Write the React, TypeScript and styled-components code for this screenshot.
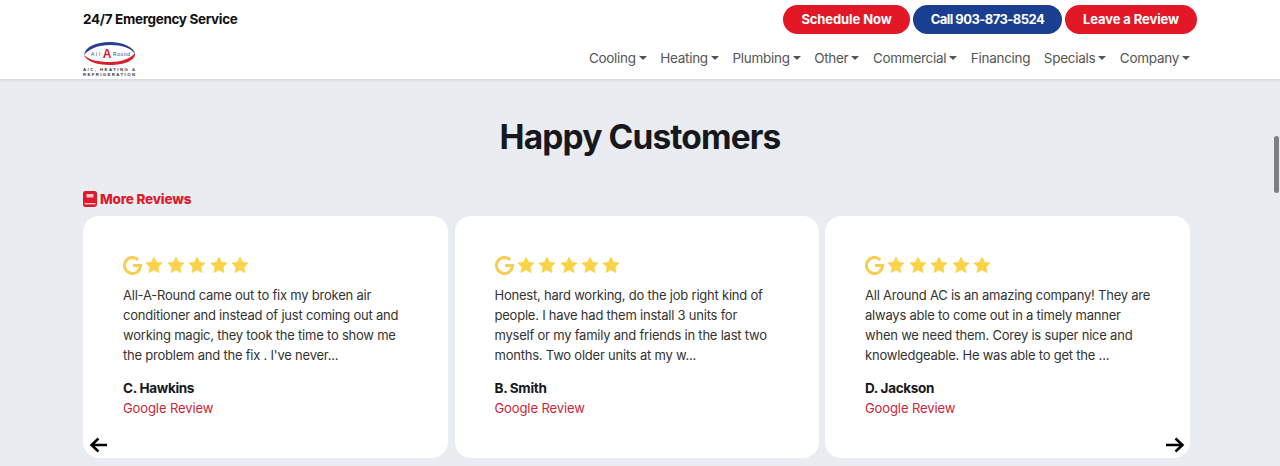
import styled, { createGlobalStyle } from "styled-components";

// #region ##################################################################################### DATA
const NAV_ITEMS = [
  { label: "Cooling", caret: true },
  { label: "Heating", caret: true },
  { label: "Plumbing", caret: true },
  { label: "Other", caret: true },
  { label: "Commercial", caret: true },
  { label: "Financing", caret: false },
  { label: "Specials", caret: true },
  { label: "Company", caret: true },
];

const REVIEWS = [
  {
    name: "C. Hawkins",
    lines: [
      "All-A-Round came out to fix my broken air",
      "conditioner and instead of just coming out and",
      "working magic, they took the time to show me",
      "the problem and the fix . I've never...",
    ],
  },
  {
    name: "B. Smith",
    lines: [
      "Honest, hard working, do the job right kind of",
      "people. I have had them install 3 units for",
      "myself or my family and friends in the last two",
      "months. Two older units at my w...",
    ],
  },
  {
    name: "D. Jackson",
    lines: [
      "All Around AC is an amazing company! They are",
      "always able to come out in a timely manner",
      "when we need them. Corey is super nice and",
      "knowledgeable. He was able to get the ...",
    ],
  },
];
// #endregion

// #region ##################################################################################### STYLES
const Global = createGlobalStyle`
  html, body {
    margin: 0;
    height: 466px;
    overflow: hidden;
    background: #e9ecf1;
    font-family: "Inter", "Liberation Sans", sans-serif;
  }
`;

const Page = styled.div`
  position: relative;
  width: 1280px;
  height: 466px;
  overflow: hidden;
`;

const Header = styled.header`
  height: 79px;
  box-sizing: border-box;
  background: #fff;
  box-shadow: 0 1px 3px rgba(0, 0, 0, 0.12);
  padding: 5px 83px 0;
`;

const TopRow = styled.div`
  display: flex;
  justify-content: space-between;
  align-items: center;
  height: 29px;
`;

const Hotline = styled.div`
  padding-bottom: 2px;
  font-size: 13.5px;
  font-weight: 700;
  color: #111;
  letter-spacing: -0.33px;
`;

const Buttons = styled.div`
  display: flex;
  gap: 3px;
`;

const PillButton = styled.a<{ $blue?: boolean; $width: number }>`
  display: flex;
  align-items: center;
  justify-content: center;
  box-sizing: border-box;
  height: 29px;
  padding-bottom: 1px;
  width: ${(p) => p.$width}px;
  border-radius: 15px;
  background: ${(p) => (p.$blue ? "#1a3f91" : "#e21826")};
  color: #fff;
  font-size: 13px;
  font-weight: 700;
  letter-spacing: ${(p) => (p.$blue ? "-0.55px" : "-0.1px")};
`;

const NavRow = styled.div`
  display: flex;
  justify-content: space-between;
  align-items: flex-start;
`;

const Logo = styled.svg`
  display: block;
  margin-top: 7px;
`;

const Nav = styled.nav`
  display: flex;
  gap: 13.5px;
  margin-top: 15px;
  margin-right: 7px;
`;

const NavItem = styled.a`
  display: flex;
  align-items: center;
  gap: 3px;
  font-size: 13.5px;
  line-height: 18px;
  color: #555;
  letter-spacing: -0.28px;
`;

const Caret = styled.span`
  width: 0;
  height: 0;
  border-left: 4px solid transparent;
  border-right: 4px solid transparent;
  border-top: 4px solid #555;
`;

const Main = styled.main`
  padding: 0 83px;
`;

const Title = styled.h1`
  margin: 38px 0 0;
  text-align: center;
  font-size: 33.5px;
  line-height: 41px;
  font-weight: 700;
  color: #16181d;
  letter-spacing: -0.87px;
`;

const MoreLink = styled.a`
  display: flex;
  align-items: center;
  gap: 3px;
  margin-top: 32px;
  height: 18px;
  font-size: 13.5px;
  font-weight: 800;
  color: #dc1a2b;
  letter-spacing: -0.2px;
`;

const MoreLabel = styled.span`
  padding-bottom: 1px;
`;

const Cards = styled.div`
  display: grid;
  grid-template-columns: 365px 364px 365px;
  column-gap: 6.5px;
  margin-top: 8px;
`;

const Card = styled.article`
  height: 242px;
  box-sizing: border-box;
  background: #fff;
  border-radius: 16px;
  padding: 38px 40px 0;
`;

const Rating = styled.div`
  display: flex;
  align-items: center;
  gap: 3.4px;
  height: 22px;
`;

const Body = styled.p`
  margin: 9px 0 0;
  font-size: 13px;
  line-height: 20px;
  color: #333;
  letter-spacing: -0.22px;
  white-space: nowrap;
`;

const Name = styled.div`
  margin-top: 13px;
  font-size: 13.5px;
  line-height: 20px;
  font-weight: 700;
  color: #16181d;
  letter-spacing: -0.3px;
`;

const Source = styled.div`
  font-size: 13px;
  line-height: 20px;
  color: #c9263c;
  letter-spacing: -0.1px;
`;

const Arrow = styled.svg<{ $right?: boolean }>`
  position: absolute;
  top: 435px;
  ${(p) => (p.$right ? "left: 1165px;" : "left: 88px;")}
`;

const ScrollThumb = styled.div`
  position: absolute;
  left: 1274px;
  top: 136px;
  width: 5px;
  height: 57px;
  border-radius: 3px;
  background: #7b7e82;
`;
// #endregion

// #region ##################################################################################### COMPONENT
const GoogleG = () => (
  <svg width="19" height="19" viewBox="0 0 19 19">
    <path d="M15.2 3.9A8 8 0 1 0 17.5 9.5H10" fill="none" stroke="#f6cf52" strokeWidth="3" />
  </svg>
);

const Star = () => (
  <svg width="18" height="18" viewBox="0 0 24 24">
    <path
      d="M12 1.5l3.3 6.9 7.5 1-5.5 5.2 1.4 7.5L12 18.4l-6.7 3.7 1.4-7.5L1.2 9.4l7.5-1z"
      fill="#fbd347"
      stroke="#fbd347"
      strokeLinejoin="round"
    />
  </svg>
);

const App = () => {
  return (
    <Page>
      <Global />
      <Header>
        <TopRow>
          <Hotline>24/7 Emergency Service</Hotline>
          <Buttons>
            <PillButton $width={127}>Schedule Now</PillButton>
            <PillButton $blue $width={149}>
              Call 903-873-8524
            </PillButton>
            <PillButton $width={132}>Leave a Review</PillButton>
          </Buttons>
        </TopRow>
        <NavRow>
          <Logo width="53" height="36" viewBox="0 0 53 36">
            <path d="M1 14C2 6 13 1 27 1c13 0 24 5 25 12-4-6-13-9-25-9C15 4 6 8 1 14z" fill="#2a3f92" />
            <path d="M52 12c1 7-10 12-25 12C13 24 3 20 1 14c5 5 14 7 26 7 11 0 20-3 25-9z" fill="#d8202f" />
            <text x="8" y="14.5" fontSize="5" textLength="9" fill="#2a3f92" fontFamily="Liberation Sans">All</text>
            <text x="19.7" y="16.5" fontSize="12" fontWeight="700" fill="#d8202f" fontFamily="Liberation Sans">A</text>
            <text x="30" y="14.5" fontSize="5" textLength="17" fill="#2a3f92" fontFamily="Liberation Sans">Round</text>
            <text x="0" y="29.5" fontSize="4.3" fontWeight="700" textLength="52" fill="#333" fontFamily="Liberation Sans">A/C, HEATING &amp;</text>
            <text x="0" y="34.5" fontSize="4.3" fontWeight="700" textLength="52" fill="#333" fontFamily="Liberation Sans">REFRIGERATION</text>
          </Logo>
          <Nav>
            {NAV_ITEMS.map((item) => (
              <NavItem key={item.label}>
                {item.label}
                {item.caret && <Caret />}
              </NavItem>
            ))}
          </Nav>
        </NavRow>
      </Header>

      <Main>
        <Title>Happy Customers</Title>
        <MoreLink>
          <svg width="14" height="16" viewBox="0 0 14 16">
            <path d="M2.5 0h9A2.5 2.5 0 0 1 14 2.5V13a3 3 0 0 1-3 3H2.5A2.5 2.5 0 0 1 0 13.5v-11A2.5 2.5 0 0 1 2.5 0z" fill="#dc1a2b" />
            <rect x="3.5" y="3" width="7" height="3.5" fill="#f7c3c8" />
            <rect x="1.5" y="12" width="11" height="1.4" fill="#f7c3c8" />
          </svg>
          <MoreLabel>More Reviews</MoreLabel>
        </MoreLink>
        <Cards>
          {REVIEWS.map((review) => (
            <Card key={review.name}>
              <Rating>
                <GoogleG />
                {[0, 1, 2, 3, 4].map((i) => (
                  <Star key={i} />
                ))}
              </Rating>
              <Body>
                {review.lines.map((line) => (
                  <span key={line}>
                    {line}
                    <br />
                  </span>
                ))}
              </Body>
              <Name>{review.name}</Name>
              <Source>Google Review</Source>
            </Card>
          ))}
        </Cards>
      </Main>

      <Arrow width="20" height="20" viewBox="0 0 20 20" fill="none" stroke="#000" strokeWidth="2.5">
        <path d="M19 10H3.5M10.5 3.5L3.5 10l7 6.5" />
      </Arrow>
      <Arrow $right width="20" height="20" viewBox="0 0 20 20" fill="none" stroke="#000" strokeWidth="2.5">
        <path d="M1 10h16.5M10.5 3.5l7 6.5-7 6.5" />
      </Arrow>
      <ScrollThumb />
    </Page>
  );
};
// #endregion

// #region ##################################################################################### EXPORTS
export default App;
// #endregion
